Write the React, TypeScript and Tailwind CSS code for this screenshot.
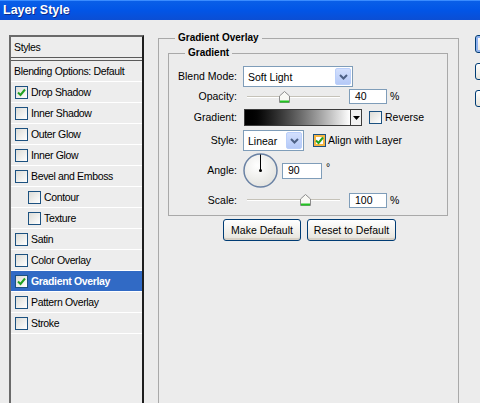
import React from "react";

const Check = () => (
  <svg width="9" height="9" viewBox="0 0 9 9">
    <path d="M1 4.5 L3.5 7 L8 1.5" fill="none" stroke="#21a121" strokeWidth="2" />
  </svg>
);

function Box({ checked = false, hover = false }: { checked?: boolean; hover?: boolean }) {
  return (
    <span
      className={
        "w-[13px] h-[13px] border border-[#1c5180] flex items-center justify-center shrink-0 " +
        (hover ? "bg-[#fff] shadow-[inset_0_0_0_2px_#f5b543]" : "bg-gradient-to-br from-[#dcdcd7] to-white")
      }
    >
      {checked && <Check />}
    </span>
  );
}

function Chevron() {
  return (
    <span className="w-[16px] h-[17px] mr-[1px] bg-gradient-to-b from-[#d3e0fd] to-[#b5c9f7] border border-[#bacffa] rounded-[2px] flex items-center justify-center">
      <svg width="9" height="6" viewBox="0 0 9 6">
        <path d="M1 1 L4.5 4.5 L8 1" fill="none" stroke="#4d6185" strokeWidth="2" />
      </svg>
    </span>
  );
}

function Select({ w, text }: { w: string; text: string }) {
  return (
    <div className={"h-[21px] border border-[#7f9db9] bg-white flex items-center justify-between " + w}>
      <span className="pl-[4px] pt-[2px] text-[10.5px]">{text}</span>
      <Chevron />
    </div>
  );
}

function Slider({ pos }: { pos: number }) {
  return (
    <div className="relative ml-[4px] w-[93px] h-[12px] flex items-center">
      <div className="w-full h-[2px] bg-[#c5c2b8] border-b border-white" />
      <svg
        width="11"
        height="12"
        viewBox="0 0 11 12"
        className="absolute top-[0px]"
        style={{ left: pos - 5.5 }}
      >
        <path d="M0.5 5 L5.5 0.5 L10.5 5 L10.5 11.5 L0.5 11.5 Z" fill="#f8f8f4" stroke="#8c8c8c" />
        <rect x="1" y="9.5" width="9" height="2" fill="#21c421" />
      </svg>
    </div>
  );
}

function Input({ w, value }: { w: string; value: string }) {
  return (
    <div className={"h-[15px] border border-[#7f9db9] bg-white flex items-center pl-[5px] " + w}>
      {value}
    </div>
  );
}

function Label({ children }: { children: React.ReactNode }) {
  return <div className="w-[69px] text-right pr-[1px] shrink-0">{children}</div>;
}

function XPButton({ w, children }: { w: string; children: React.ReactNode }) {
  return (
    <div
      className={
        "h-[22px] rounded-[3px] border border-[#003c74] bg-gradient-to-b from-white to-[#e6e4dc] flex items-center justify-center shadow-[inset_0_-2px_0_#d6d0c5] text-[10.5px] " +
        w
      }
    >
      {children}
    </div>
  );
}

const items: { name: string; checked?: boolean; indent?: boolean; selected?: boolean }[] = [
  { name: "Drop Shadow", checked: true },
  { name: "Inner Shadow" },
  { name: "Outer Glow" },
  { name: "Inner Glow" },
  { name: "Bevel and Emboss" },
  { name: "Contour", indent: true },
  { name: "Texture", indent: true },
  { name: "Satin" },
  { name: "Color Overlay" },
  { name: "Gradient Overlay", checked: true, selected: true },
  { name: "Pattern Overlay" },
  { name: "Stroke" },
];

export default function App() {
  return (
    <div
      className="w-[480px] h-[403px] overflow-hidden bg-[#ececec] text-black text-[10px] leading-[13px]"
      style={{ fontFamily: '"Liberation Sans", Arial, sans-serif' }}
    >
      {/* title bar */}
      <div className="h-[20px] bg-gradient-to-b from-[#0a5fe8] via-[#0255e6] to-[#0b4ed4] flex items-center pl-[3px] border-t border-[#3a8cff]">
        <span className="text-white font-bold text-[12.5px] [text-shadow:1px_1px_0_#0c2a8a]">Layer Style</span>
      </div>

      <div className="flex items-start pt-[15px]">
        {/* Left list */}
        <div className="ml-[9px] w-[135px] h-[400px] shrink-0 border-t-2 border-l-2 border-r-2 border-t-[#6a6a6a] border-l-[#6a6a6a] border-r-[#1e1e1e] bg-[#ededed] text-[10.5px] tracking-[-0.35px]">
          <div className="h-[24px] border-b-[4px] border-double border-[#5a5a5a] flex items-center pl-[3px]">Styles</div>
          <div className="h-[21px] border-b border-white flex items-center pl-[3px]">Blending Options: Default</div>
          {items.map((it) => (
            <div
              key={it.name}
              className={
                "h-[21px] border-b border-white flex items-center " +
                (it.indent ? "pl-[17px] " : "pl-[4px] ") +
                (it.selected ? "bg-[#316ac5] text-white font-bold" : "")
              }
            >
              <Box checked={it.checked} />
              <span className="ml-[3px]">{it.name}</span>
            </div>
          ))}
        </div>

        {/* Gradient Overlay group */}
        <div className="ml-[14px] mt-[3px] w-[301px] h-[380px] shrink-0 border border-[#a9a9a9]">
          <div className="-mt-[8px] ml-[16px] flex">
            <span className="bg-[#ececec] px-[3px] font-bold leading-[14px]">Gradient Overlay</span>
          </div>

          <div className="mt-[8px] ml-[9px] w-[280px] h-[163px] border border-[#a9a9a9]">
            <div className="-mt-[8px] ml-[16px] flex">
              <span className="bg-[#ececec] px-[3px] font-bold leading-[14px]">Gradient</span>
            </div>

            <div className="mt-[6px] flex flex-col text-[10.5px]">
              <div className="h-[21px] flex items-center">
                <Label>Blend Mode:</Label>
                <div className="ml-[5px]">
                  <Select w="w-[110px]" text="Soft Light" />
                </div>
              </div>

              <div className="h-[19px] flex items-center">
                <Label>Opacity:</Label>
                <div className="ml-[5px] flex items-center">
                  <Slider pos={37.5} />
                  <div className="ml-[9px]">
                    <Input w="w-[38px]" value="40" />
                  </div>
                  <span className="ml-[3px]">%</span>
                </div>
              </div>

              <div className="h-[23px] flex items-center">
                <Label>Gradient:</Label>
                <div className="ml-[6px] flex items-center">
                  <div className="flex border border-[#3c3c3c] h-[17px]">
                    <div className="w-[105px] h-full bg-gradient-to-r from-black to-white" />
                    <div className="w-[11px] h-full border-l border-[#3c3c3c] bg-[#f2f2f2] flex items-center justify-center">
                      <svg width="7" height="4" viewBox="0 0 7 4">
                        <path d="M0 0 L7 0 L3.5 4 Z" fill="#000" />
                      </svg>
                    </div>
                  </div>
                  <div className="ml-[7px] flex items-center">
                    <Box />
                    <span className="ml-[3px]">Reverse</span>
                  </div>
                </div>
              </div>

              <div className="h-[23px] flex items-center">
                <Label>Style:</Label>
                <div className="ml-[5px] flex items-center">
                  <Select w="w-[61px]" text="Linear" />
                  <div className="ml-[9px] flex items-center">
                    <Box checked hover />
                    <span className="ml-[2px]">Align with Layer</span>
                  </div>
                </div>
              </div>

              <div className="h-[37px] flex items-center">
                <Label>Angle:</Label>
                <div className="ml-[5px] flex items-center">
                  <svg width="35" height="35" viewBox="0 0 35 35">
                    <defs>
                      <radialGradient id="dial" cx="0.4" cy="0.35" r="0.7">
                        <stop offset="0" stopColor="#ffffff" />
                        <stop offset="1" stopColor="#e2e2de" />
                      </radialGradient>
                    </defs>
                    <circle cx="17.5" cy="17.5" r="16.5" fill="url(#dial)" stroke="#6a82a4" strokeWidth="1.5" />
                    <line x1="17.5" y1="17.5" x2="17.5" y2="1.5" stroke="#000" strokeWidth="1" />
                    <circle cx="17.5" cy="17.5" r="1.5" fill="#000" />
                  </svg>
                  <div className="ml-[4px]">
                    <div className="h-[16px] w-[40px] border border-[#7f9db9] bg-white flex items-center pl-[5px]">90</div>
                  </div>
                  <span className="ml-[4px] -mt-[6px]">°</span>
                </div>
              </div>

              <div className="h-[22px] flex items-center">
                <Label>Scale:</Label>
                <div className="ml-[5px] flex items-center">
                  <Slider pos={58} />
                  <div className="ml-[9px]">
                    <Input w="w-[38px]" value="100" />
                  </div>
                  <span className="ml-[3px]">%</span>
                </div>
              </div>
            </div>
          </div>

          <div className="mt-[3px] ml-[64px] flex gap-[6px]">
            <XPButton w="w-[78px]">Make Default</XPButton>
            <XPButton w="w-[89px]">Reset to Default</XPButton>
          </div>
        </div>

        {/* right buttons */}
        <div className="ml-[16px] flex flex-col gap-[10px] shrink-0">
          <div className="w-[24px] h-[18px] rounded-[3px] border border-[#003c74] bg-gradient-to-b from-white to-[#e6e4dc] shadow-[inset_0_0_0_2px_#8fb1ee]" />
          <div className="w-[24px] h-[17px] rounded-[3px] border border-[#003c74] bg-gradient-to-b from-white to-[#e6e4dc]" />
          <div className="w-[24px] h-[17px] rounded-[3px] border border-[#003c74] bg-gradient-to-b from-white to-[#e6e4dc]" />
        </div>
      </div>
    </div>
  );
}
